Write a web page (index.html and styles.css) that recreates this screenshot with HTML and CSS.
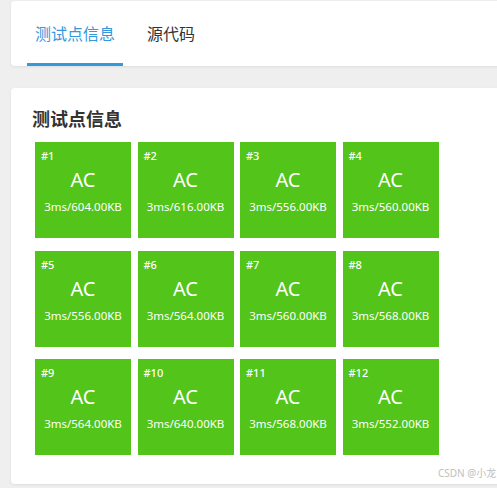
FILE: index.html
```html
<!DOCTYPE html>
<html>
<head>
<meta charset="utf-8">
<link rel="stylesheet" href="styles.css">
</head>
<body>
<div class="tabs-card">
  <div class="tab active">测试点信息</div>
  <div class="tab">源代码</div>
</div>
<div class="main-card">
  <h2 class="title">测试点信息</h2>
  <div class="grid">
    <div class="case"><div class="num">#1</div><div class="res">AC</div><div class="stat">3ms/604.00KB</div></div>
    <div class="case"><div class="num">#2</div><div class="res">AC</div><div class="stat">3ms/616.00KB</div></div>
    <div class="case"><div class="num">#3</div><div class="res">AC</div><div class="stat">3ms/556.00KB</div></div>
    <div class="case"><div class="num">#4</div><div class="res">AC</div><div class="stat">3ms/560.00KB</div></div>
    <div class="case"><div class="num">#5</div><div class="res">AC</div><div class="stat">3ms/556.00KB</div></div>
    <div class="case"><div class="num">#6</div><div class="res">AC</div><div class="stat">3ms/564.00KB</div></div>
    <div class="case"><div class="num">#7</div><div class="res">AC</div><div class="stat">3ms/560.00KB</div></div>
    <div class="case"><div class="num">#8</div><div class="res">AC</div><div class="stat">3ms/568.00KB</div></div>
    <div class="case"><div class="num">#9</div><div class="res">AC</div><div class="stat">3ms/564.00KB</div></div>
    <div class="case"><div class="num">#10</div><div class="res">AC</div><div class="stat">3ms/640.00KB</div></div>
    <div class="case"><div class="num">#11</div><div class="res">AC</div><div class="stat">3ms/568.00KB</div></div>
    <div class="case"><div class="num">#12</div><div class="res">AC</div><div class="stat">3ms/552.00KB</div></div>
  </div>
  <div class="watermark">CSDN @小龙</div>
</div>
</body>
</html>
```
FILE: styles.css
```css
html, body {
  margin: 0;
  padding: 0;
}
body {
  background: #efefef;
  font-family: "Noto Sans", "Noto Sans CJK SC", sans-serif;
  width: 497px;
  height: 488px;
  overflow: hidden;
  padding-top: 1px;
  box-sizing: border-box;
}
.tabs-card {
  margin-left: 11px;
  width: 500px;
  height: 65px;
  background: #fff;
  border-radius: 4px;
  box-shadow: 0 1px 3px rgba(0,0,0,0.08);
  display: flex;
  padding-left: 16px;
  gap: 16px;
  box-sizing: border-box;
}
.tab {
  padding: 0 8px;
  font-size: 16px;
  line-height: 16px;
  color: #333;
  display: flex;
  align-items: center;
  border-bottom: 3px solid transparent;
  padding-top: 3px;
}
.tab.active {
  color: #3498db;
  border-bottom-color: #3498db;
}
.main-card {
  position: relative;
  margin-left: 11px;
  margin-top: 22px;
  width: 500px;
  height: 396px;
  background: #fff;
  border-radius: 4px;
  box-shadow: 0 1px 3px rgba(0,0,0,0.08);
  padding: 19px 0 0 21px;
  box-sizing: border-box;
}
.title {
  margin: 0;
  font-size: 18px;
  line-height: 24px;
  font-weight: bold;
  color: #333;
}
.grid {
  margin-top: 11px;
  margin-left: 3px;
  display: grid;
  grid-template-columns: repeat(4, 96px);
  column-gap: 6.5px;
  row-gap: 12.5px;
}
.case {
  width: 96px;
  height: 96px;
  background: #52c41a;
  color: #fff;
  box-sizing: border-box;
  padding-top: 7px;
}
.num {
  font-size: 11px;
  line-height: 14px;
  padding-left: 6px;
  font-weight: 500;
}
.res {
  font-size: 20px;
  line-height: 24px;
  text-align: center;
  margin-top: 5px;
}
.stat {
  font-size: 11.5px;
  line-height: 16px;
  text-align: center;
  margin-top: 7px;
}
.watermark {
  position: absolute;
  left: 427px;
  top: 379px;
  font-size: 10px;
  line-height: 12px;
  color: #c0c0c0;
}
```
